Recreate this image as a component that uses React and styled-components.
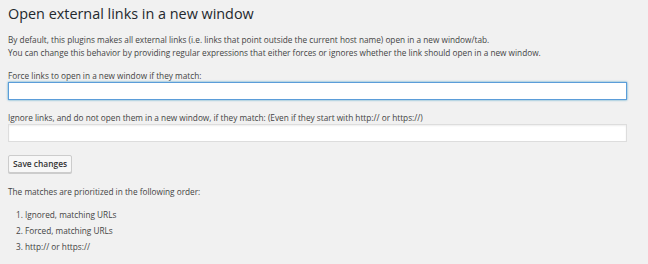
import React from 'react';
import styled, { createGlobalStyle } from 'styled-components';

const GlobalStyle = createGlobalStyle`
  html, body {
    margin: 0;
    padding: 0;
    background: #f1f1f1;
  }
  body {
    font-family: 'Open Sans', 'Noto Sans', sans-serif;
    color: #444;
  }
`;

const Wrap = styled.div`
  width: 648px;
  height: 264px;
  box-sizing: border-box;
  padding: 0 21px 0 8px;
  overflow: hidden;
`;

const Title = styled.h1`
  font-size: 14.4px;
  font-weight: 400;
  color: #23282d;
  margin: 0;
  padding-top: 2px;
  line-height: 24px;
`;

const Intro = styled.p`
  font-size: 8.25px;
  line-height: 13px;
  margin: 7px 0 0;
`;

const Form = styled.form`
  display: flex;
  flex-direction: column;
  margin-top: 10px;
`;

const Label = styled.label`
  font-size: 8.25px;
  line-height: 13px;
  display: block;
  margin-top: ${p => p.$top || 0}px;
`;

const Input = styled.input`
  display: block;
  box-sizing: border-box;
  width: 100%;
  height: 18px;
  margin-top: 0;
  background: #fff;
  border: 1px solid ${p => (p.$focus ? '#5b9dd9' : '#ddd')};
  box-shadow: ${p => (p.$focus ? '0 0 2px rgba(30,140,190,0.8)' : 'inset 0 1px 2px rgba(0,0,0,0.07)')};
  outline: none;
  font-family: inherit;
  font-size: 8.25px;
  padding: 0 4px;
`;

const Button = styled.button`
  align-self: flex-start;
  box-sizing: border-box;
  height: 18px;
  width: 64px;
  margin-top: 13px;
  padding: 0;
  background: #f7f7f7;
  border: 1px solid #ccc;
  border-radius: 2px;
  box-shadow: 0 1px 0 #ccc;
  color: #333;
  font-family: inherit;
  font-size: 8.4px;
  font-weight: 600;
  line-height: 16px;
`;

const Note = styled.p`
  font-size: 8.25px;
  line-height: 13px;
  margin: 12px 0 0;
`;

const Steps = styled.ol`
  margin: 9px 0 0;
  padding-left: 17px;
  font-size: 8.25px;
  line-height: 16px;
`;

const Step = styled.li`
  line-height: 16px;
  height: 16px;
`;

export default function App() {
  return (
    <Wrap>
      <GlobalStyle />
      <Title>Open external links in a new window</Title>
      <Intro>
        By default, this plugins makes all external links (i.e. links that point outside the current host name) open in a new window/tab.
        <br />
        You can change this behavior by providing regular expressions that either forces or ignores whether the link should open in a new window.
      </Intro>
      <Form onSubmit={e => e.preventDefault()}>
        <Label>Force links to open in a new window if they match:</Label>
        <Input type="text" $focus />
        <Label $top={11}>Ignore links, and do not open them in a new window, if they match: (Even if they start with http:// or https://)</Label>
        <Input type="text" />
        <Button type="submit">Save changes</Button>
      </Form>
      <Note>The matches are prioritized in the following order:</Note>
      <Steps>
        <Step>Ignored, matching URLs</Step>
        <Step>Forced, matching URLs</Step>
        <Step>http:// or https://</Step>
      </Steps>
    </Wrap>
  );
}
